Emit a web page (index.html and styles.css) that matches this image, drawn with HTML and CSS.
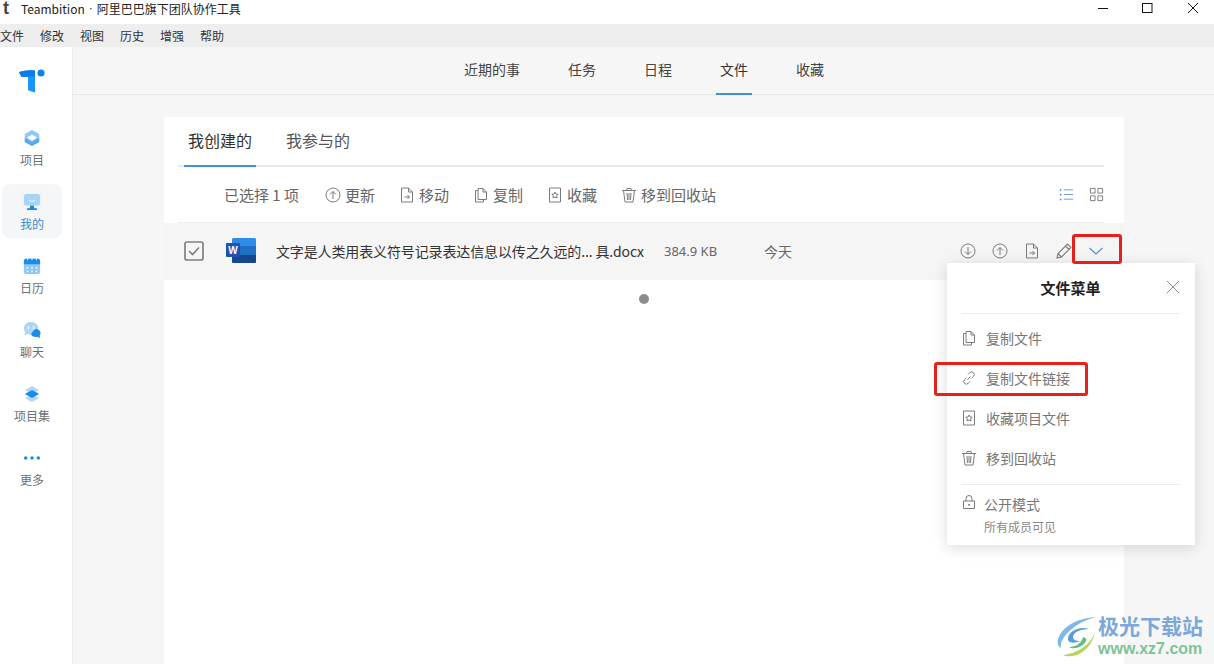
FILE: index.html
```html
<!DOCTYPE html>
<html lang="zh">
<head>
<meta charset="utf-8">
<title>Teambition</title>
<link rel="stylesheet" href="styles.css">
</head>
<body>
<header class="titlebar">
  <span class="app-t">t</span>
  <span class="app-title"><span>Teambition</span><span class="title-dot">·</span><span>阿里巴巴旗下团队协作工具</span></span>
  <div class="win-ctrls">
    <svg class="win-btn" viewBox="0 0 12 12"><path d="M1 6.500h10" stroke="#111" fill="none"/></svg>
    <svg class="win-btn" viewBox="0 0 12 12"><rect x="0.500" y="1.500" width="9.500" height="9" stroke="#111" fill="none"/></svg>
    <svg class="win-btn" viewBox="0 0 12 12"><path d="M1 1l10 10M11 1L1 11" stroke="#111" fill="none"/></svg>
  </div>
</header>
<nav class="menubar">
  <span>文件</span><span>修改</span><span>视图</span><span>历史</span><span>增强</span><span>帮助</span>
</nav>
<div class="app">
  <aside class="sidebar">
    <svg class="logo" viewBox="0 0 26 24"><path d="M0 3Q8 .5 16 1.500V23.500l-5-1.500-2-1V8H3Q1 6 0 3z" fill="#1a94ff"/><path d="M0 3Q8 .5 16 1.500V7.500H9L3 8Q1 6 0 3z" fill="#0c7bf0"/><circle cx="22" cy="4" r="3.600" fill="#0b83e8"/></svg>
    <a class="side-item">
      <svg viewBox="0 0 20 20"><path d="M10 1l8 4.500v9L10 19l-8-4.500v-9z" fill="#92c8f5"/><path d="M10 6l5.500 3.500L10 13 4.500 9.500z" fill="#fff"/><path d="M2 9.500l8 5 8-5v5L10 19l-8-4.500z" fill="#5aa9ea"/></svg>
      <span>项目</span>
    </a>
    <a class="side-item active">
      <svg viewBox="0 0 20 20"><rect x="1" y="1" width="18" height="13" rx="2.500" fill="#a5d3fa"/><path d="M6.500 8q3.500 3 7 0" stroke="#fff" fill="none"/><path d="M8 14h4l.5 3h3v2h-11v-2h3z" fill="#1a8ae5"/></svg>
      <span>我的</span>
    </a>
    <a class="side-item">
      <svg viewBox="0 0 20 20"><rect x="1" y="2" width="18" height="17" rx="2.500" fill="#8cc7f5"/><path d="M1 8V4.500A2.500 2.500 0 0 1 3.500 2h13A2.500 2.500 0 0 1 19 4.500V8z" fill="#1d8ee8"/><path d="M5 1.500v2M10 1.500v2M15 1.500v2" stroke="#fff"/><path d="M4 11h2v2H4zm5 0h2v2H9zm5 0h2v2h-2zM4 15h2v2H4zm5 0h2v2H9zm5 0h2v2h-2z" fill="#e8f4fe"/></svg>
      <span>日历</span>
    </a>
    <a class="side-item">
      <svg viewBox="0 0 20 20"><path d="M9 1c4.500 0 8 3 8 7s-3.500 7-8 7c-1.500 0-2.500 0-3.500-.5L1.500 16l1-3.500C1.500 11 1 9.500 1 8c0-4 3.500-7 8-7z" fill="#a9d6f9"/><path d="M14 9c3 0 5.500 2 5.500 4.500 0 1-.5 2-1 3l.5 2.500-3-1.500c-3 1-6.500-.5-7-3 1.500-2 3-5 5-5.500z" fill="#1b8ce6"/><path d="M6 5.500v4M12 5.500v4" stroke="#fff" stroke-width="1.200"/></svg>
      <span>聊天</span>
    </a>
    <a class="side-item">
      <svg viewBox="0 0 20 20"><path d="M10 1l8 4.500-8 4.500-8-4.500z" fill="#b2d8f7"/><path d="M10 11l8 3.500-8 4.500-8-4.500z" fill="#b2d8f7"/><path d="M10 5.500l8 4.500-8 4.500L2 10z" fill="#1a8ce8"/></svg>
      <span>项目集</span>
    </a>
    <a class="side-item">
      <svg viewBox="0 0 20 20"><circle cx="3" cy="10" r="2" fill="#1f8fdc"/><circle cx="10" cy="10" r="2" fill="#1f8fdc"/><circle cx="17" cy="10" r="2" fill="#1f8fdc"/></svg>
      <span>更多</span>
    </a>
  </aside>
  <main class="main">
    <nav class="topnav">
      <a>近期的事</a><a>任务</a><a>日程</a><a class="current">文件</a><a>收藏</a>
    </nav>
    <section class="card">
      <div class="tabs">
        <a class="tab current">我创建的</a>
        <a class="tab">我参与的</a>
      </div>
      <div class="toolbar">
        <span class="sel-count">已选择 1 项</span>
        <span class="tool"><svg class="ico" viewBox="0 0 16 16"><use href="#i-up"/></svg>更新</span>
        <span class="tool"><svg class="ico" viewBox="0 0 16 16"><use href="#i-move"/></svg>移动</span>
        <span class="tool"><svg class="ico" viewBox="0 0 16 16"><use href="#i-copy"/></svg>复制</span>
        <span class="tool"><svg class="ico" viewBox="0 0 16 16"><use href="#i-star"/></svg>收藏</span>
        <span class="tool"><svg class="ico" viewBox="0 0 16 16"><use href="#i-trash"/></svg>移到回收站</span>
        <span class="views">
          <svg class="ico" viewBox="0 0 16 16"><path d="M5 3h10M5 8h10M5 13h10" stroke="#6d9bd0" fill="none"/><path d="M1 2.500h1.500v1.500H1zM1 7.500h1.500V9H1zM1 12.500h1.500V14H1z" fill="#3d86cf"/></svg>
          <svg class="ico" viewBox="0 0 16 16"><path d="M1.500 1.500h5v5h-5zM9.500 1.500h5v5h-5zM1.500 9.500h5v5h-5zM9.500 9.500h5v5h-5z" stroke="#7a7a7a" fill="none"/></svg>
        </span>
      </div>
      <div class="file-row">
        <svg class="check" viewBox="0 0 20 20"><rect x="1" y="1" width="18" height="18" rx="2" fill="none" stroke="#808080" stroke-width="1.700"/><path d="M5 10l3.500 3.500L15 6.500" fill="none" stroke="#808080" stroke-width="1.700"/></svg>
        <svg class="word" viewBox="0 0 30 26"><rect x="6" y="0" width="24" height="25" rx="1.500" fill="#2f8be6"/><rect x="6" y="8" width="24" height="9" fill="#1f6fc4"/><path d="M6 17h24v6.500a1.500 1.500 0 0 1-1.500 1.500h-21A1.500 1.500 0 0 1 6 23.500z" fill="#15478f"/><rect x="0" y="5" width="14" height="14" rx="1" fill="#1e50b5"/><text x="7" y="16" class="word-w">W</text></svg>
        <span class="file-name">文字是人类用表义符号记录表达信息以传之久远的... 具.docx</span>
        <span class="file-size">384.9 KB</span>
        <span class="file-date">今天</span>
        <span class="row-actions">
          <svg class="ico big" viewBox="0 0 16 16"><use href="#i-down"/></svg>
          <svg class="ico big" viewBox="0 0 16 16"><use href="#i-up"/></svg>
          <svg class="ico big" viewBox="0 0 16 16"><use href="#i-move"/></svg>
          <svg class="ico big" viewBox="0 0 16 16"><path d="M1 15l1-4.500L11.500 1l3.500 3.500L5.500 14zM9.500 3l3.500 3.500M2 10.500L5.500 14" fill="none" stroke="#7a7a7a" stroke-width="1.100"/></svg>
          <svg class="chev" viewBox="0 0 16 10"><path d="M1.500 2L8 8l6.500-6" fill="none" stroke="#4a8fd0" stroke-width="1.100"/></svg>
          <span class="red-box chev-box"></span>
        </span>
      </div>
      <div class="spinner-row"><i class="dot"></i></div>
    </section>
    <aside class="popup">
      <div class="popup-head">
        <span>文件菜单</span>
        <svg class="close" viewBox="0 0 14 14"><path d="M1 1l12 12M13 1L1 13" stroke="#8a8a8a" fill="none"/></svg>
      </div>
      <ul class="popup-list">
        <li><svg class="ico" viewBox="0 0 16 16"><use href="#i-copy"/></svg>复制文件</li>
        <li><svg class="ico" viewBox="0 0 16 16"><path d="M6.500 9.500l3-3M7 4.500l1.800-1.800a2.600 2.600 0 0 1 3.700 3.700L10.700 8.200M9 11.500l-1.800 1.800a2.600 2.600 0 0 1-3.700-3.700L5.300 7.800" fill="none" stroke="#7a7a7a"/></svg>复制文件链接<span class="red-box link-box"></span></li>
        <li><svg class="ico" viewBox="0 0 16 16"><use href="#i-star"/></svg>收藏项目文件</li>
        <li><svg class="ico" viewBox="0 0 16 16"><use href="#i-trash"/></svg>移到回收站</li>
      </ul>
      <div class="popup-foot">
        <svg class="ico" viewBox="0 0 16 16"><path d="M2.500 7h11v7.500h-11zM5 7V4.500a3 3 0 0 1 6 0V7" fill="none" stroke="#7a7a7a"/><circle cx="8" cy="10.800" r="1" fill="#7a7a7a"/></svg>
        <div class="foot-text">
          <span class="foot-title">公开模式</span>
          <span class="foot-sub">所有成员可见</span>
        </div>
      </div>
    </aside>
    <div class="watermark">
      <svg class="wm-logo" viewBox="0 0 42 42"><path d="M41 2C24 3 8 10 3 24c-1 4 0 8 3 9C4 24 18 8 41 2z" fill="#7cb9e8"/><path d="M34 14c-9-3-20 2-21 9-1 5 6 6 12 3-4 0-7-1-7-4 0-5 8-8 16-8z" fill="#5a9ad6"/><path d="M40 16c-2 10-14 22-32 24 4 2 12 2 18-2 8-5 13-13 14-22z" fill="#b6d65a"/><path d="M28 22c-1 6-7 10-14 10 5 3 14 0 17-6 1-2 0-3-3-4z" fill="#63bd7a"/></svg>
      <div class="wm-text">
        <span class="wm-cn">极光下载站</span>
        <span class="wm-url">www.xz7.com</span>
      </div>
    </div>
  </main>
</div>
<svg class="defs" width="0" height="0">
  <defs>
    <g id="i-up" fill="none" stroke="#7a7a7a"><circle cx="8" cy="8" r="7"/><path d="M8 12V4.500M5 7.500l3-3 3 3"/></g>
    <g id="i-down" fill="none" stroke="#7a7a7a"><circle cx="8" cy="8" r="7"/><path d="M8 4v7.500M5 8.500l3 3 3-3"/></g>
    <g id="i-move" fill="none" stroke="#7a7a7a"><path d="M2.500 1h7l4 4v10h-11zM9.500 1v4h4M5.500 10h5M8.500 8l2 2-2 2"/></g>
    <g id="i-copy" fill="none" stroke="#7a7a7a"><path d="M5 1.500h5l3.500 3.500v7.500H5zM10 1.500V5h3.500M5 3.500H2.500V15h8v-2.500"/></g>
    <g id="i-star" fill="none" stroke="#7a7a7a"><path d="M2.500 1h11v14h-11z"/><path d="M8 5l1 2 2.200.3-1.600 1.500.4 2.200-2-1-2 1 .4-2.200L4.800 7.300 7 7z"/></g>
    <g id="i-trash" fill="none" stroke="#7a7a7a"><path d="M1 3.500h14M5.500 3.500L6 1.500h4l.5 2M2.500 3.500L4 15h8l1.500-11.500M6 6l.5 7M10 6l-.5 7M8 6v7"/></g>
  </defs>
</svg>
</body>
</html>
```
FILE: styles.css
```css
* { box-sizing: border-box; }
html, body { margin: 0; height: 664px; overflow: hidden; }
body {
  background: #fff;
  font-family: "Noto Sans CJK SC", "Liberation Sans", sans-serif;
  color: #555;
  display: flex;
  flex-direction: column;
}
.defs { position: absolute; }
.titlebar {
  height: 24px;
  display: flex;
  align-items: flex-start;
  background: #fff;
  flex: none;
}
.app-t {
  font: bold 18px/17px "Liberation Sans", sans-serif;
  color: #444;
  width: 21px;
  padding-left: 3px;
}
.app-title { font-size: 12px; color: #222; line-height: 17px; display: flex; gap: 4px; }
.title-dot { font-family: "Liberation Sans", sans-serif; }
.win-ctrls { margin-left: auto; display: flex; padding: 2px 15px 0 0; gap: 33px; }
.win-btn { width: 12px; height: 12px; }
.menubar {
  height: 23px;
  flex: none;
  background: #eee;
  display: flex;
  gap: 16px;
  font-size: 12px;
  line-height: 23px;
  color: #333;
}
.app { flex: 1; display: flex; min-height: 0; }
.sidebar {
  width: 73px;
  flex: none;
  background: #fff;
  border-right: 1px solid #ececec;
  box-shadow: 1px 0 2px rgba(0,0,0,.03);
  display: flex;
  flex-direction: column;
  align-items: center;
  padding: 22px 8px 0 0;
}
.logo { width: 26px; height: 24px; margin-bottom: 27px; }
.side-item {
  width: 60px;
  height: 54px;
  margin-bottom: 10px;
  padding-top: 3px;
  border-radius: 8px;
  display: flex;
  flex-direction: column;
  align-items: center;
  justify-content: center;
  gap: 5px;
  font-size: 12px;
  line-height: 16px;
  color: #707070;
}
.side-item svg { width: 18px; height: 18px; }
.side-item.active { background: #f4f6f8; color: #3d86cf; }
.main { flex: 1; position: relative; background: #f6f6f6; display: flex; flex-direction: column; min-width: 0; }
.topnav {
  height: 48px;
  flex: none;
  border-bottom: 1px solid #e6e6e6;
  display: flex;
  justify-content: center;
  gap: 48px;
  font-size: 14px;
  color: #444;
  padding-left: 1px;
}
.topnav a { height: 48px; line-height: 45px; position: relative; }
.topnav a.current { color: #333; }
.topnav a.current::after {
  content: "";
  position: absolute;
  left: -4px;
  right: -4px;
  bottom: 0;
  height: 2px;
  background: #3c93cf;
}
.card {
  flex: 1;
  margin: 22px 90px 0 91px;
  background: #fff;
  display: flex;
  flex-direction: column;
  min-height: 0;
}
.tabs {
  height: 50px;
  margin: 0 20px 0 14px;
  flex: none;
  border-bottom: 2px solid #e8e8e8;
  display: flex;
  gap: 30px;
  align-items: flex-start;
}
.tab { width: 64px; font-size: 16px; line-height: 46px; color: #555; text-align: center; position: relative; height: 50px; }
.tab.current { color: #333; margin-left: 6px; width: 72px; z-index: 1; }
.tab.current::after {
  content: "";
  position: absolute;
  left: 0;
  right: 0;
  bottom: 0;
  height: 2px;
  background: #3c93cf;
}
.toolbar {
  height: 56px;
  flex: none;
  margin: 0 20px 0 14px;
  border-bottom: 1px solid #ececec;
  display: flex;
  align-items: center;
  gap: 24px;
  padding-left: 46px;
  font-size: 15px;
  color: #666;
}
.sel-count { min-width: 77px; }
.tool { display: flex; align-items: center; gap: 4px; }
.ico { width: 16px; height: 16px; flex: none; }
.views { margin-left: auto; display: flex; gap: 15px; }
.views .ico { width: 15px; height: 15px; }
.file-row {
  height: 57px;
  flex: none;
  background: #f5f5f5;
  display: flex;
  align-items: center;
  padding: 0 0 1px 20px;
  font-size: 14px;
}
.check { width: 20px; height: 20px; flex: none; }
.word { width: 30px; height: 26px; flex: none; margin-left: 22px; }
.word-w { font: bold 10px "Liberation Sans", sans-serif; fill: #fff; text-anchor: middle; }
.file-name { margin-left: 20px; width: 368px; color: #333; white-space: nowrap; letter-spacing: -.13px; }
.file-size { margin-left: 20px; width: 100px; color: #666; font-family: "Noto Sans", sans-serif; font-size: 13px; }
.file-date { color: #666; }
.row-actions { margin-left: auto; display: flex; align-items: center; gap: 16px; padding-right: 20px; position: relative; }
.big { width: 16px; height: 16px; }
.chev { width: 16px; height: 10px; }
.red-box { position: absolute; border: 3px solid #e6211c; border-radius: 3px; pointer-events: none; z-index: 5; }
.chev-box { right: 2px; top: -9px; width: 50px; height: 30px; }
.spinner-row { display: flex; justify-content: center; padding-top: 14px; }
.dot { width: 10px; height: 10px; border-radius: 50%; background: #8c8c8c; }
.popup {
  position: absolute;
  left: 874px;
  top: 216px;
  width: 248px;
  height: 282px;
  background: #fff;
  box-shadow: 0 3px 14px rgba(0,0,0,.14);
  padding: 0 15px 0 14px;
}
.popup-head {
  height: 51px;
  border-bottom: 1px solid #ececec;
  position: relative;
  text-align: center;
  font-size: 15px;
  font-weight: 700;
  color: #222;
  line-height: 49px;
}
.close { position: absolute; right: 0; top: 17px; width: 14px; height: 14px; }
.popup-list { list-style: none; margin: 0; padding: 4px 0 0; border-bottom: 1px solid #ececec; height: 171px; }
.popup-list li { height: 40px; line-height: 38px; display: flex; align-items: center; gap: 9px; font-size: 14px; color: #777; position: relative; }
.link-box { left: -27px; top: 4px; width: 154px; height: 34px; }
.popup-foot { display: flex; gap: 7px; padding-top: 9px; }
.foot-text { display: flex; flex-direction: column; }
.foot-title { font-size: 14px; line-height: 20px; color: #777; }
.foot-sub { font-size: 12px; line-height: 25px; color: #888; }
.watermark { position: absolute; left: 982px; top: 566px; display: flex; gap: 1px; align-items: flex-start; }
.wm-logo { width: 42px; height: 42px; margin-top: 2px; }
.wm-text { display: flex; flex-direction: column; }
.wm-cn { font-size: 21px; line-height: 24px; color: #7ba8d8; font-weight: 700; }
.wm-url { font-family: "Liberation Sans", sans-serif; font-size: 16px; line-height: 18px; margin-top: 3px; color: #7cc496; font-weight: 700; }
```
